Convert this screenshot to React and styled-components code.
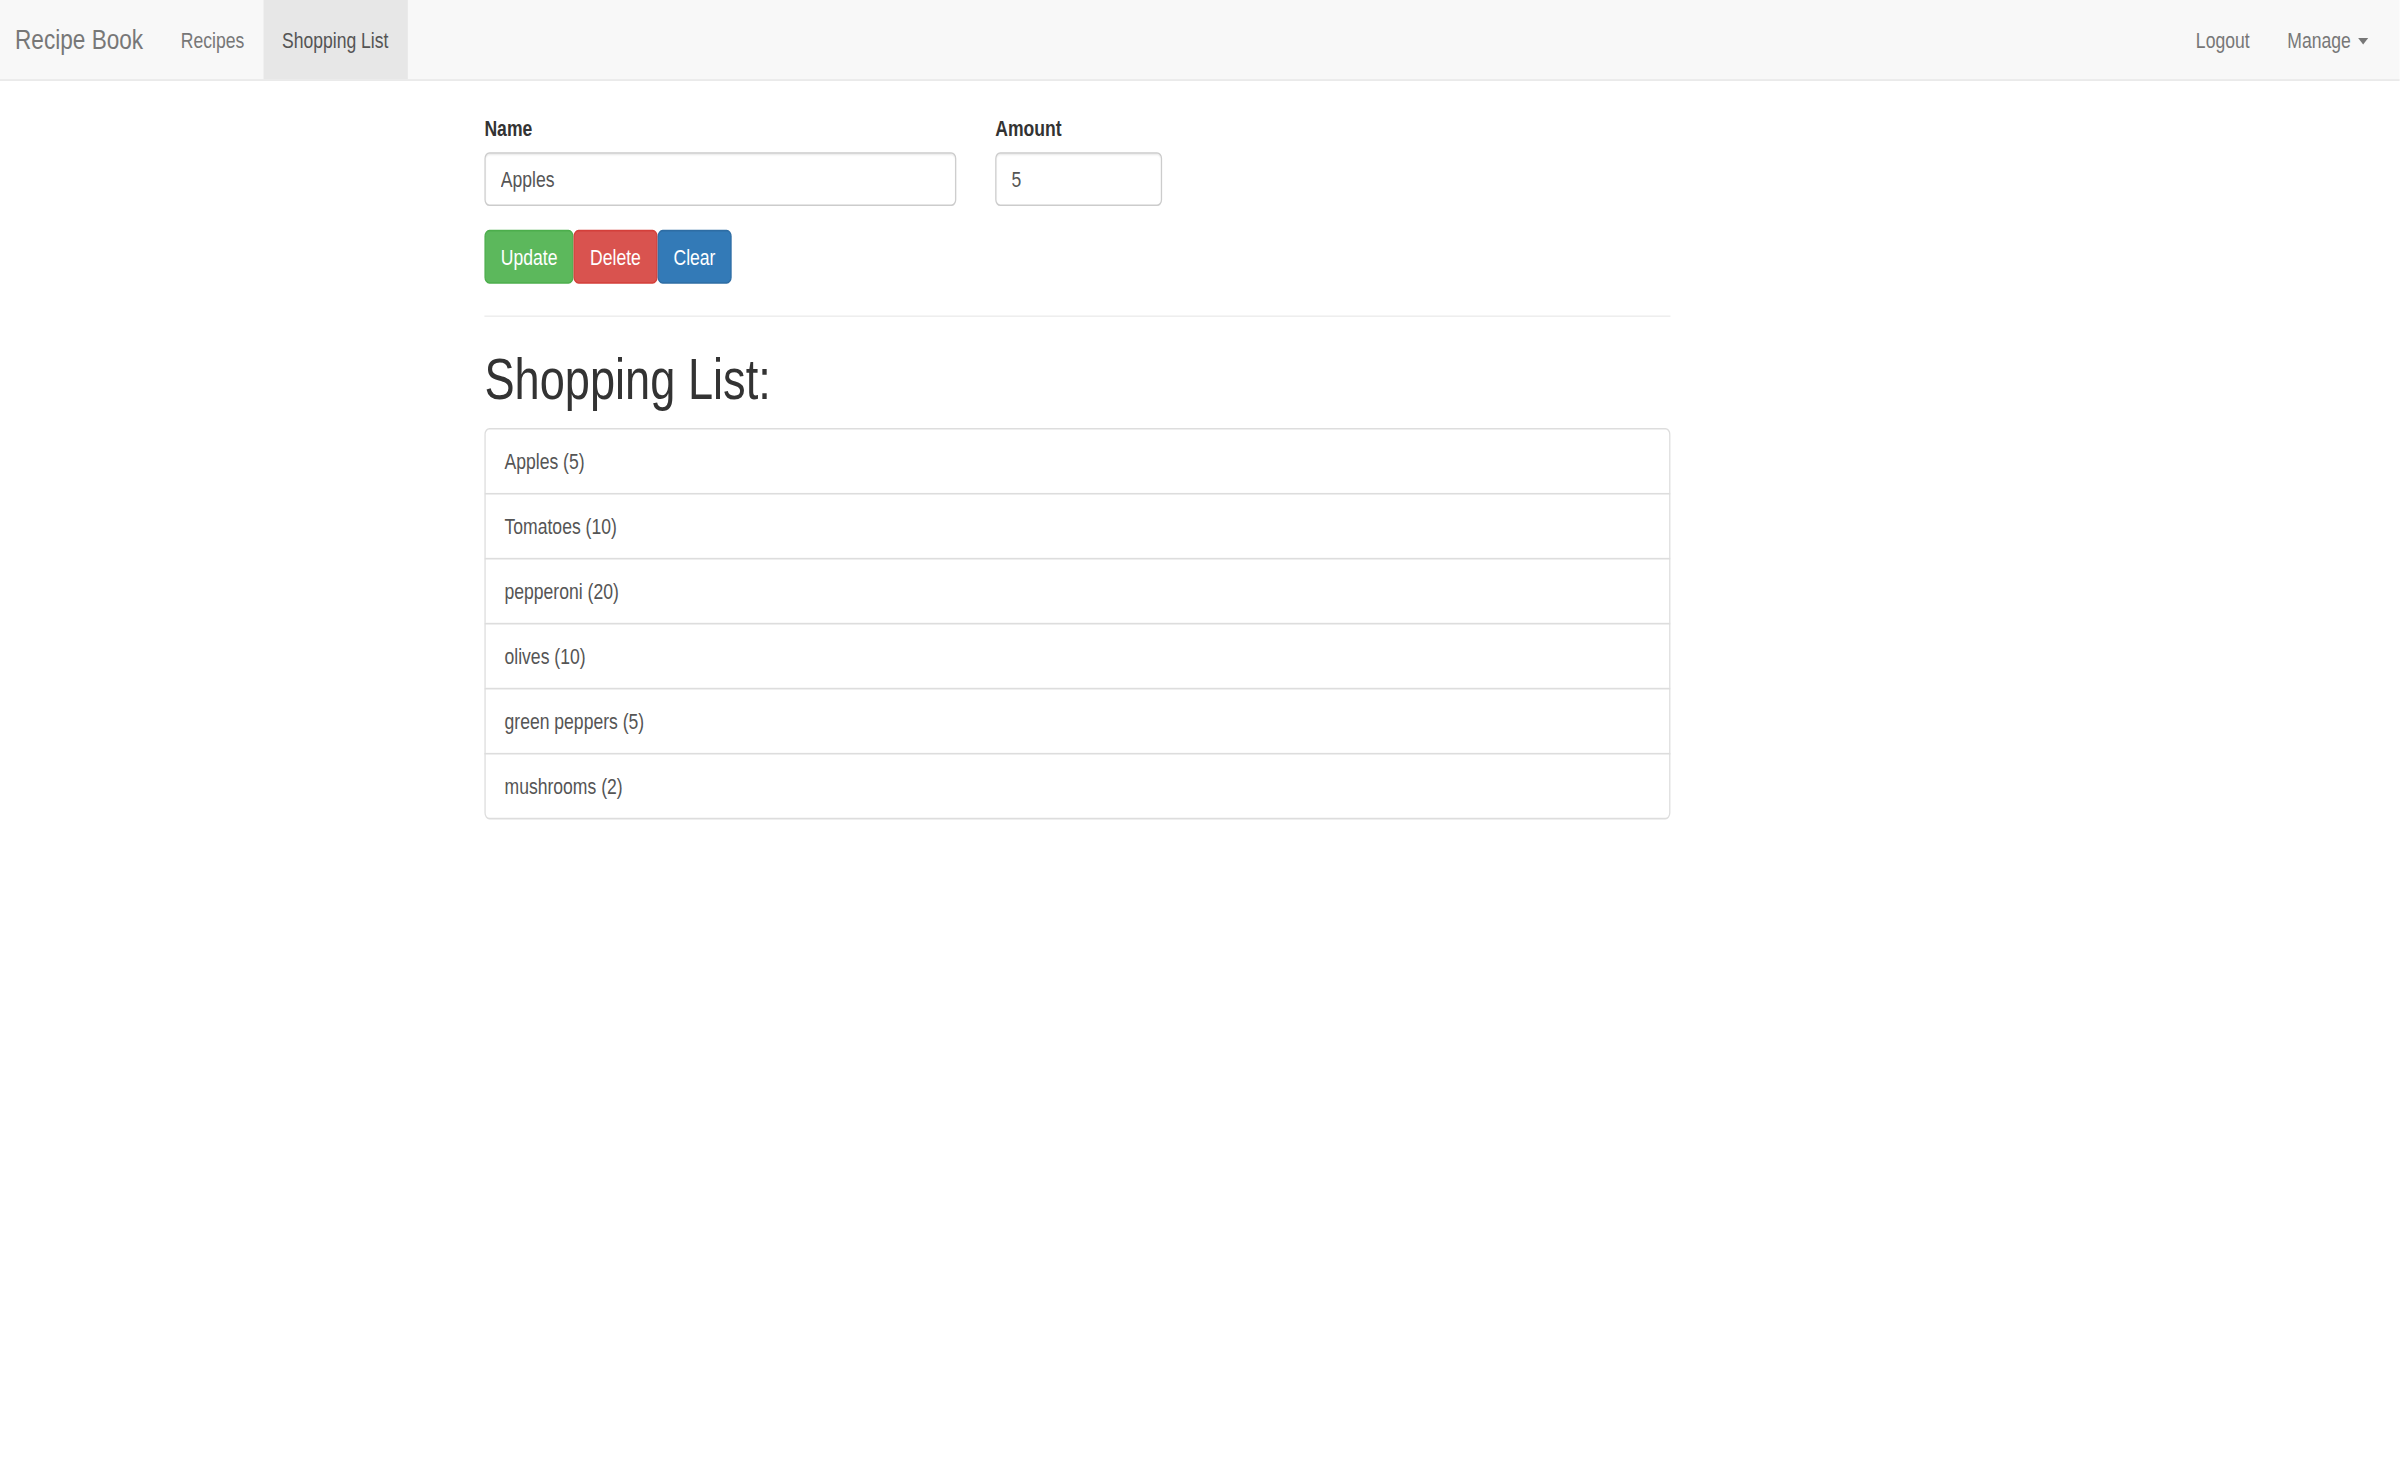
import React from "react";
import styled, { createGlobalStyle } from "styled-components";

/* The reference is a 1912×923 Bootstrap-style page photographed into a
   2400×1463 frame, i.e. stretched 1.255× horizontally and 1.585× vertically.
   The page is written in its own CSS pixels and the Stage applies that stretch. */

const GlobalStyle = createGlobalStyle`
  html, body {
    margin: 0;
    padding: 0;
    background: #ffffff;
    overflow: hidden;
  }
  body {
    font-family: "Liberation Sans", "Helvetica Neue", Helvetica, Arial, sans-serif;
    font-size: 14px;
    line-height: 1.42857143;
    color: #333333;
  }
  * { box-sizing: border-box; }
`;

const Stage = styled.div`
  width: 1912px;
  min-height: 923px;
  background: #ffffff;
  transform: scale(1.255, 1.585);
  transform-origin: 0 0;
`;

const Navbar = styled.nav`
  display: flex;
  justify-content: space-between;
  min-height: 50px;
  margin-bottom: 20px;
  padding-right: 10px;
  background: #f8f8f8;
  border-bottom: 1px solid #e7e7e7;
`;

const NavGroup = styled.div`
  display: flex;
  align-items: stretch;
`;

const Brand = styled.a`
  display: block;
  height: 50px;
  padding: 15px 15px 15px 12px;
  font-size: 18px;
  line-height: 20px;
  color: #777777;
  text-decoration: none;
`;

const NavLink = styled.a`
  display: block;
  padding: 15px;
  line-height: 20px;
  color: ${(p) => (p.$active ? "#555555" : "#777777")};
  background: ${(p) => (p.$active ? "#e7e7e7" : "transparent")};
  text-decoration: none;
`;

const Caret = styled.span`
  display: inline-block;
  width: 0;
  height: 0;
  margin-left: 2px;
  vertical-align: middle;
  border-top: 4px solid;
  border-right: 4px solid transparent;
  border-left: 4px solid transparent;
`;

const Container = styled.main`
  width: 1170px;
  margin: 0 auto;
  padding: 0 15px;
`;

const Column = styled.div`
  width: 945px;
`;

const FormRow = styled.div`
  display: grid;
  grid-template-columns: 376px 132.5px;
  column-gap: 31px;
  margin-bottom: 15px;
`;

const Field = styled.div`
  display: flex;
  flex-direction: column;
  align-items: flex-start;
`;

const Label = styled.label`
  display: inline-block;
  margin-bottom: 5px;
  font-weight: bold;
`;

const Input = styled.input`
  display: block;
  width: 100%;
  height: 34px;
  padding: 6px 12px;
  font-family: inherit;
  font-size: 14px;
  line-height: 1.42857143;
  color: #555555;
  background: #ffffff;
  border: 1px solid #cccccc;
  border-radius: 4px;
  box-shadow: inset 0 1px 1px rgba(0, 0, 0, 0.075);
  outline: none;
`;

const ButtonRow = styled.div`
  display: flex;
`;

const variants = {
  success: { bg: "#5cb85c", border: "#4cae4c" },
  danger: { bg: "#d9534f", border: "#d43f3a" },
  primary: { bg: "#337ab7", border: "#2e6da4" },
};

const Button = styled.button`
  height: 34px;
  padding: 6px 12px;
  font-family: inherit;
  font-size: 14px;
  line-height: 1.42857143;
  color: #ffffff;
  background: ${(p) => variants[p.$variant].bg};
  border: 1px solid ${(p) => variants[p.$variant].border};
  border-radius: 4px;
  cursor: pointer;
`;

const Divider = styled.hr`
  margin: 20px 0;
  border: 0;
  border-top: 1px solid #eeeeee;
`;

const Heading = styled.h1`
  margin: 20px 0 10px;
  font-size: 36px;
  font-weight: 500;
  line-height: 1.1;
  color: #333333;
`;

const List = styled.ul`
  margin: 0 0 20px;
  padding: 0;
  list-style: none;
`;

const Item = styled.li`
  padding: 10px 15px;
  color: #555555;
  background: #ffffff;
  border: 1px solid #dddddd;
  margin-bottom: -1px;

  &:first-child {
    border-top-left-radius: 4px;
    border-top-right-radius: 4px;
  }
  &:last-child {
    margin-bottom: 0;
    border-bottom-left-radius: 4px;
    border-bottom-right-radius: 4px;
  }
`;

const items = [
  { name: "Apples", amount: 5 },
  { name: "Tomatoes", amount: 10 },
  { name: "pepperoni", amount: 20 },
  { name: "olives", amount: 10 },
  { name: "green peppers", amount: 5 },
  { name: "mushrooms", amount: 2 },
];

export default function App() {
  return (
    <>
      <GlobalStyle />
      <Stage>
        <Navbar>
          <NavGroup>
            <Brand href="#">Recipe Book</Brand>
            <NavLink href="#">Recipes</NavLink>
            <NavLink href="#" $active>
              Shopping List
            </NavLink>
          </NavGroup>
          <NavGroup>
            <NavLink href="#">Logout</NavLink>
            <NavLink href="#">
              Manage <Caret />
            </NavLink>
          </NavGroup>
        </Navbar>
        <Container>
          <Column>
            <FormRow>
              <Field>
                <Label htmlFor="name">Name</Label>
                <Input id="name" type="text" defaultValue="Apples" />
              </Field>
              <Field>
                <Label htmlFor="amount">Amount</Label>
                <Input id="amount" type="text" defaultValue="5" />
              </Field>
            </FormRow>
            <ButtonRow>
              <Button $variant="success">Update</Button>
              <Button $variant="danger">Delete</Button>
              <Button $variant="primary">Clear</Button>
            </ButtonRow>
            <Divider />
            <Heading>Shopping List:</Heading>
            <List>
              {items.map((it) => (
                <Item key={it.name}>
                  {it.name} ({it.amount})
                </Item>
              ))}
            </List>
          </Column>
        </Container>
      </Stage>
    </>
  );
}
